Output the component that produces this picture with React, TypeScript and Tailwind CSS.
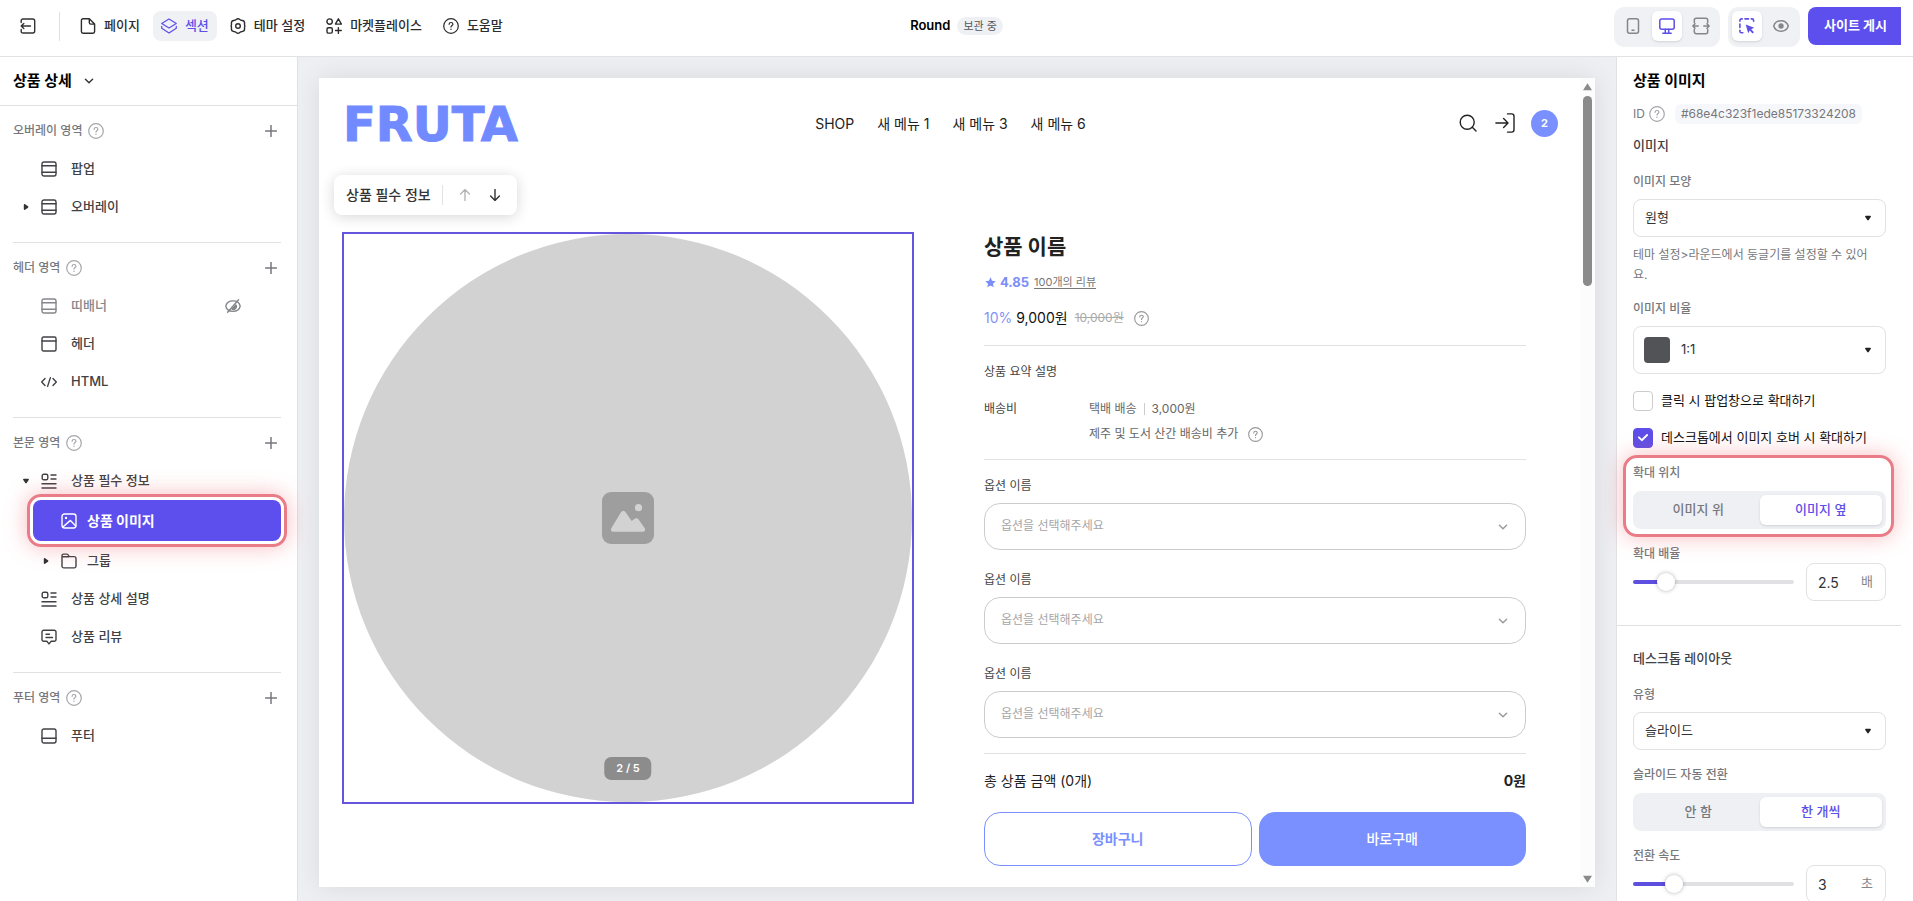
import { useState, type ReactNode } from "react";
import clsx from "clsx";

type IconProps = { className?: string };

const Svg = ({
  children,
  className = "size-4",
  sw = 1.4,
  box = 16,
}: {
  children: ReactNode;
  className?: string;
  sw?: number;
  box?: number;
}) => (
  <svg
    className={clsx("shrink-0", className)}
    viewBox={`0 0 ${box} ${box}`}
    fill="none"
    stroke="currentColor"
    strokeWidth={sw}
    strokeLinecap="round"
    strokeLinejoin="round"
    aria-hidden="true"
  >
    {children}
  </svg>
);

const ExitIcon = () => (
  <Svg>
    <path d="M1.2 4.6V2.6a1.6 1.6 0 0 1 1.6-1.6h10a1.9 1.9 0 0 1 1.9 1.9v10.2a1.9 1.9 0 0 1-1.9 1.9h-10a1.6 1.6 0 0 1-1.6-1.6v-2M1.2 8h9.3M3.8 5.4 1.2 8l2.6 2.6" />
  </Svg>
);
const PageIcon = () => (
  <Svg>
    <path d="M9.3.8H3.1A1.7 1.7 0 0 0 1.4 2.5v11a1.7 1.7 0 0 0 1.7 1.7h9.8a1.7 1.7 0 0 0 1.7-1.7V6.1L9.3.8ZM9.3.8v3.7c0 .9.7 1.6 1.6 1.6h3.7" />
  </Svg>
);
const LayersIcon = () => (
  <Svg className="-mx-px h-4 w-[18px]" box={18}>
    <path d="M9 1.2 17.2 6.2 9 11.2.8 6.2 9 1.2ZM.8 9.4v2.2L9 16.8l8.2-5.2V9.4" />
  </Svg>
);
const ThemeIcon = () => (
  <Svg>
    <path d="M6.6 1.3Q8 .1 9.4 1.3 10.6 2.4 12.2 2.5 14.6 2.8 14.6 5 14.3 6.6 14.9 8 14.3 9.4 14.6 11 14.6 13.2 12.2 13.5 10.6 13.6 9.4 14.7 8 15.9 6.6 14.7 5.4 13.6 3.8 13.5 1.4 13.2 1.4 11 1.7 9.4 1.1 8 1.7 6.6 1.4 5 1.4 2.8 3.8 2.5 5.4 2.4 6.6 1.3Z" />
    <circle cx="8" cy="8" r="2.3" />
  </Svg>
);
const MarketIcon = () => (
  <Svg>
    <circle cx="3.6" cy="3.6" r="2.7" />
    <path d="m12.4.8 3 5.3H9.4l3-5.3ZM12.4 9.6v5.8M9.5 12.5h5.8" />
    <rect x="1" y="9.8" width="5.3" height="5.3" rx="1.3" />
  </Svg>
);
const HelpIcon = ({ className = "size-4" }: IconProps) => (
  <Svg className={className} sw={1.2}>
    <circle cx="8" cy="8" r="7.3" />
    <path d="M6.1 6.3c0-1.1.8-1.8 1.9-1.8s1.9.7 1.9 1.7c0 1.3-1.9 1.4-1.9 2.9M8 11.2v.2" />
  </Svg>
);
const ChevronIcon = ({ className }: IconProps) => (
  <Svg className={className} box={10}>
    <path d="m1.4 3.2 3.6 3.6 3.6-3.6" />
  </Svg>
);
const PlusIcon = () => (
  <Svg className="size-3" box={12} sw={1.5}>
    <path d="M6 .5v11M.5 6h11" />
  </Svg>
);
const SectionIcon = () => (
  <Svg>
    <rect x="1" y="1" width="14" height="14" rx="2" />
    <path d="M1 4.7h14M1 11.3h14" />
  </Svg>
);
const HeaderIcon = () => (
  <Svg>
    <rect x="1" y="1" width="14" height="14" rx="1.5" />
    <path d="M1 5h14" />
  </Svg>
);
const FooterIcon = () => (
  <Svg>
    <rect x="1" y="1" width="14" height="14" rx="2" />
    <path d="M1 10.3h14" />
  </Svg>
);
const CodeIcon = () => (
  <Svg>
    <path d="M4 4.6.7 8 4 11.4M12 4.6 15.3 8 12 11.4M9.4 3.6 6.6 12.4" />
  </Svg>
);
const BlockIcon = () => (
  <Svg>
    <rect x="1.2" y="1.2" width="5.6" height="5.6" rx="1.6" />
    <path d="M10 2h5M10 6h5M1 10.8h14M1 15h14" />
  </Svg>
);
const ImageIcon = () => (
  <Svg>
    <rect x="1" y="1" width="14" height="14" rx="2.4" />
    <path d="M1.6 14.2 9.4 7.4l5.4 5.6" />
    <circle cx="5" cy="4.9" r="1.2" fill="currentColor" stroke="none" />
  </Svg>
);
const FolderIcon = () => (
  <Svg>
    <path d="M1 3v-.3a1.6 1.6 0 0 1 1.6-1.6h3.2c.8 0 1.3.4 1.6 1.1l.6 1.4h5.2A1.8 1.8 0 0 1 15 5.4v7.7a1.8 1.8 0 0 1-1.8 1.8H2.8A1.8 1.8 0 0 1 1 13.1V3ZM1 3.7h6.8" />
  </Svg>
);
const ReviewIcon = () => (
  <Svg>
    <path d="M2.8 1.2h10.4A1.8 1.8 0 0 1 15 3v7.4a1.8 1.8 0 0 1-1.8 1.8h-3L8 14.9l-2.2-2.7h-3A1.8 1.8 0 0 1 1 10.4V3a1.8 1.8 0 0 1 1.8-1.8ZM5 5.3h3.5M5 8.5h6.5" />
  </Svg>
);
const HiddenIcon = () => (
  <Svg>
    <path d="M.8 8.2C1.4 5 4.4 2.9 8 2.9s6.6 2.1 7.2 5.3C14.6 11.3 11.6 13.4 8 13.4S1.4 11.3.8 8.2ZM13.6 1.8 2.6 14.2" />
    <path d="m10.9 6-4.8 5a2.9 2.9 0 0 0 4.8-5Z" fill="currentColor" stroke="none" />
  </Svg>
);

const Caret = ({ open }: { open: boolean }) => (
  <svg className={clsx("size-1.5", !open && "-rotate-90")} viewBox="0 0 6 6" fill="currentColor" aria-hidden="true">
    <path d="M.9.8h4.2c.8 0 1.1.7.6 1.3L3.7 5c-.4.5-1 .5-1.4 0L.3 2.1C-.2 1.5.1.8.9.8Z" />
  </svg>
);

const menu = [
  { label: "페이지", icon: <PageIcon /> },
  { label: "섹션", icon: <LayersIcon />, active: true },
  { label: "테마 설정", icon: <ThemeIcon /> },
  { label: "마켓플레이스", icon: <MarketIcon /> },
  { label: "도움말", icon: <HelpIcon /> },
];

const TopBar = () => (
  <header className="grid h-[57px] shrink-0 grid-cols-[1fr_auto_1fr] border-b border-[#e2e2e4]">
    <div className="flex items-center pb-1">
      <button className="ml-5 text-[#333]" aria-label="나가기">
        <ExitIcon />
      </button>
      <span className="mr-3 ml-[23px] h-[29px] w-px bg-[#dfe0e3]" />
      <nav className="flex gap-[5px]">
        {menu.map(({ label, icon, active }) => (
          <button
            key={label}
            className={clsx(
              "flex h-[30px] items-center gap-2 rounded-lg px-2 font-medium whitespace-nowrap",
              active ? "bg-[#f0f1f4] text-[#5d4fe8]" : "text-[#2c2c2e]",
            )}
          >
            {icon}
            {label}
          </button>
        ))}
      </nav>
    </div>

    <div className="flex items-center gap-[7px] pb-1">
      <h1 className="font-semibold text-black">Round</h1>
      <span className="rounded-full bg-[#eff0f3] px-1.5 text-[11px] leading-[18px] text-[#55565a]">보관 중</span>
    </div>

    <div className="flex items-start justify-end gap-2 pt-[7px] pr-3">
      <div className="flex gap-1 rounded-[10px] bg-[#f0f1f4] p-1 pb-1.5 text-[#85868a]">
        <button className="flex size-[30px] items-center justify-center" aria-label="모바일">
          <Svg sw={1.5}>
            <rect x="2.5" y=".8" width="11" height="14.4" rx="2" />
            <path d="M7 12.3h2" />
          </Svg>
        </button>
        <button
          className="flex size-[30px] items-center justify-center rounded-md bg-white text-[#5d4fe8] shadow-sm"
          aria-label="데스크톱"
        >
          <Svg sw={1.5}>
            <rect x=".8" y=".9" width="14.4" height="10.4" rx="2" />
            <path d="M6.3 11.3v3.6M9.7 11.3v3.6M3.8 15.2h8.4" />
          </Svg>
        </button>
        <button className="flex size-[30px] items-center justify-center" aria-label="전체 너비">
          <Svg className="size-[18px]" box={18} sw={1.5}>
            <path d="M2.3 5.5V3.3a2 2 0 0 1 2-2h9.4a2 2 0 0 1 2 2v2.2M2.3 12.5v2.2a2 2 0 0 0 2 2h9.4a2 2 0 0 0 2-2v-2.2M.8 9h5.4M11.8 9h5.4M3 6.8.8 9 3 11.2M15 6.8 17.2 9 15 11.2" />
          </Svg>
        </button>
      </div>
      <div className="flex gap-1 rounded-[10px] bg-[#f0f1f4] p-1 pb-1.5 text-[#85868a]">
        <button
          className="flex size-[30px] items-center justify-center rounded-md bg-white text-[#5d4fe8] shadow-sm"
          aria-label="선택 모드"
        >
          <Svg sw={1.6}>
            <path d="M.9 3.2v-.7A1.6 1.6 0 0 1 2.5.9h.7M6 .9h3.5M12.3.9h.7a1.6 1.6 0 0 1 1.6 1.6v.7M.9 6v3.5M.9 12.3v.9a1.6 1.6 0 0 0 1.6 1.6h1.3" />
            <path d="m6.7 6.5 8.5 3.3-3 1.5 2.7 3-1.4 1.2-2.7-3-1.6 2.8-2.5-8.8Z" fill="currentColor" stroke="none" />
          </Svg>
        </button>
        <button className="flex size-[30px] items-center justify-center" aria-label="미리보기">
          <Svg sw={1.5}>
            <path d="M.7 8C1.8 4.6 4.6 2.8 8 2.8s6.2 1.8 7.3 5.2c-1.1 3.4-3.9 5.2-7.3 5.2S1.8 11.4.7 8Z" />
            <circle cx="8" cy="8" r="2.7" fill="currentColor" stroke="none" />
          </Svg>
        </button>
      </div>
      <button className="h-[38px] rounded-l-lg bg-[#5d4fee] pr-3.5 pl-4 font-bold whitespace-nowrap text-white">
        사이트 게시
      </button>
    </div>
  </header>
);

const SideSection = ({ title, children, last }: { title: string; children: ReactNode; last?: boolean }) => (
  <section className={clsx("mb-1.5", !last && "border-b border-[#e1e1e3] pb-4")}>
    <div className="flex h-[38px] items-center pr-1 text-[#77787c]">
      <h3 className="text-[12px] font-medium">{title}</h3>
      <HelpIcon className="ml-1.5 size-4 text-[#a5a6aa]" />
      <button className="ml-auto text-[#77787c]" aria-label={`${title} 추가`}>
        <PlusIcon />
      </button>
    </div>
    <ul>{children}</ul>
  </section>
);

const SideItem = ({
  label,
  icon,
  open,
  nested,
  hidden,
}: {
  label: string;
  icon: ReactNode;
  open?: boolean;
  nested?: boolean;
  hidden?: boolean;
}) => (
  <li
    className={clsx(
      "flex h-[38px] items-center font-medium",
      nested && "pl-5",
      hidden ? "text-[#85868a]" : "text-[#404145]",
    )}
  >
    <span className="flex w-7 justify-end pr-3 text-[#333]">{open !== undefined && <Caret open={open} />}</span>
    {icon}
    <a href="#" className={nested ? "ml-2.5" : "ml-3.5"}>
      {label}
    </a>
    {hidden && (
      <button className="mr-10 ml-auto" aria-label="보이기">
        <HiddenIcon />
      </button>
    )}
  </li>
);

// red frame that marks a highlighted control
const HighlightRing = ({ className }: IconProps) => (
  <span
    className={clsx(
      "pointer-events-none absolute rounded-[14px] border-[3px] border-[#e97c86] shadow-[0_0_22px_rgba(240,90,100,0.4)]",
      className,
    )}
  />
);

const SelectedItem = ({ label, icon }: { label: string; icon: ReactNode }) => (
  <li className="relative mb-px ml-5 flex h-[41px] items-center rounded-lg bg-[#5d4fee] pl-7 text-[14px] font-bold text-white">
    {icon}
    <a href="#" className="ml-2.5">
      {label}
    </a>
    <HighlightRing className="-inset-1.5" />
  </li>
);

const Sidebar = () => (
  <aside className="flex w-[298px] shrink-0 flex-col border-r border-[#e1e1e3]">
    <button className="flex h-[49px] shrink-0 items-center gap-3 border-b border-[#e1e1e3] pl-[13px] text-[15px] font-bold text-black">
      상품 상세
      <ChevronIcon className="size-2.5 text-[#333]" />
    </button>
    <div className="pt-1.5 pr-4 pl-[13px]">
      <SideSection title="오버레이 영역">
        <SideItem label="팝업" icon={<SectionIcon />} />
        <SideItem label="오버레이" icon={<SectionIcon />} open={false} />
      </SideSection>
      <SideSection title="헤더 영역">
        <SideItem label="띠배너" icon={<SectionIcon />} hidden />
        <SideItem label="헤더" icon={<HeaderIcon />} />
        <SideItem label="HTML" icon={<CodeIcon />} />
      </SideSection>
      <SideSection title="본문 영역">
        <SideItem label="상품 필수 정보" icon={<BlockIcon />} open />
        <SelectedItem label="상품 이미지" icon={<ImageIcon />} />
        <SideItem label="그룹" icon={<FolderIcon />} open={false} nested />
        <SideItem label="상품 상세 설명" icon={<BlockIcon />} />
        <SideItem label="상품 리뷰" icon={<ReviewIcon />} />
      </SideSection>
      <SideSection title="푸터 영역" last>
        <SideItem label="푸터" icon={<FooterIcon />} />
      </SideSection>
    </div>
  </aside>
);

const storeMenu = ["SHOP", "새 메뉴 1", "새 메뉴 3", "새 메뉴 6"];

const StoreHeader = () => (
  <div className="grid h-[90px] grid-cols-[1fr_auto_1fr] items-center pr-[22px] pl-6 text-[14px] text-[#222]">
    <a
      href="#"
      className="pt-px font-['DejaVu_Sans',sans-serif] text-[48px] leading-none font-bold text-[#728aff] [-webkit-text-stroke:1px_#728aff]"
    >
      FRUTA
    </a>
    <nav className="flex gap-[23px] whitespace-nowrap">
      {storeMenu.map((item) => (
        <a key={item} href="#">
          {item}
        </a>
      ))}
    </nav>
    <div className="flex items-center justify-end gap-4">
      <button className="mr-0.5" aria-label="검색">
        <Svg className="size-[18px]" box={18}>
          <circle cx="8.2" cy="8.2" r="7" />
          <path d="m13.3 13.3 3.7 3.7" />
        </Svg>
      </button>
      <button aria-label="로그인">
        <Svg className="size-5" box={20}>
          <path d="M.9 10h12M8.6 5.6 13 10l-4.4 4.4M12.5.9h4.2A2.3 2.3 0 0 1 19 3.2v13.6a2.3 2.3 0 0 1-2.3 2.3h-4.2" />
        </Svg>
      </button>
      <button
        className="flex size-[27px] items-center justify-center rounded-full bg-[#7a90ff] text-[11px] font-bold text-white"
        aria-label="장바구니 2개"
      >
        2
      </button>
    </div>
  </div>
);

const OptionField = ({ id }: { id: string }) => (
  <div className="text-[12px]">
    <label htmlFor={id} className="block leading-[18px] text-[#444]">
      옵션 이름
    </label>
    <div className="relative mt-2">
      <select
        id={id}
        className="h-[47px] w-full appearance-none rounded-[16px] border border-[#ccc] bg-white px-4 pb-0.5 text-[#a6a6a6]"
      >
        <option>옵션을 선택해주세요</option>
      </select>
      <ChevronIcon className="pointer-events-none absolute top-[19px] right-[18px] size-2.5 text-[#999]" />
    </div>
  </div>
);

const ProductInfo = () => (
  <div className="min-w-0 flex-[542]">
    <h2 className="text-[21px] leading-[30px] font-bold text-[#222]">상품 이름</h2>
    <div className="mt-2.5 flex items-center leading-5">
      <svg className="ml-px size-[11px] fill-[#7a8df8]" viewBox="0 0 12 12" aria-hidden="true">
        <path d="m6 .4 1.7 3.7 4 .5-3 2.7.8 4L6 9.3l-3.500 2 .8-4-3-2.7 4-.5L6 .4Z" />
      </svg>
      <b className="ml-1 text-[13px] text-[#7a8df8]">4.85</b>
      <a href="#" className="ml-[5px] text-[11px] text-[#777] underline underline-offset-2">
        100개의 리뷰
      </a>
    </div>
    <div className="mt-4 flex items-center text-[14px] leading-5">
      <span className="text-[#8494f5]">10%</span>
      <span className="ml-1 text-[#111]">9,000원</span>
      <del className="ml-[7px] text-[12px] text-[#aaa]">10,000원</del>
      <HelpIcon className="ml-2.5 size-[15px] text-[#999]" />
    </div>
    <div className="mt-[17px] border-y border-[#e2e2e2] pt-4 pb-[15px] text-[12px] leading-5">
      <p className="text-[#444]">상품 요약 설명</p>
      <dl className="mt-[17px] flex">
        <dt className="w-[105px] text-[#444]">배송비</dt>
        <dd className="text-[#666]">
          <p className="flex items-center">
            택배 배송
            <span className="mx-[7px] h-3 w-px bg-[#ccc]" />
            3,000원
          </p>
          <p className="mt-[5px] flex items-center gap-2.5">
            제주 및 도서 산간 배송비 추가
            <HelpIcon className="size-[15px] text-[#999]" />
          </p>
        </dd>
      </dl>
    </div>
    <div className="flex flex-col gap-[21px] border-b border-[#e2e2e2] pt-[17px] pb-[15px]">
      <OptionField id="option-1" />
      <OptionField id="option-2" />
      <OptionField id="option-3" />
    </div>
    <div className="mt-[17px] flex justify-between text-[14px] leading-5 text-[#222]">
      <span>총 상품 금액 (0개)</span>
      <b>0원</b>
    </div>
    <div className="mt-[21px] grid grid-cols-2 gap-[7px] text-[14px] font-bold">
      <button className="h-[54px] rounded-[16px] border border-[#7a90ff] pb-0.5 text-[#7a90ff]">장바구니</button>
      <button className="h-[54px] rounded-[16px] bg-[#7a90ff] pb-0.5 font-medium text-white">바로구매</button>
    </div>
  </div>
);

const ProductImage = () => (
  <div className="relative aspect-square min-w-0 flex-[568] self-start border-2 border-[#6455dc]">
    <div className="flex size-full items-center justify-center rounded-full bg-[#d2d2d2]">
      <svg className="size-[52px]" viewBox="0 0 52 52" aria-hidden="true">
        <rect width="52" height="52" rx="9" fill="#9e9e9e" />
        <path
          d="M9.3 36.3 19 20.2c1-1.7 3.6-1.7 4.6 0l6.1 8.9 2.6-2.2c1.4-1.2 3.4-.8 4.3.7l6.2 8.7c1 1.5 0 3.5-1.8 3.5H11c-1.8 0-2.7-2-1.7-3.5Z"
          fill="#d2d2d2"
        />
        <circle cx="36.5" cy="15.7" r="3.6" fill="#d2d2d2" />
      </svg>
    </div>
    <span className="absolute bottom-[22px] left-1/2 -translate-x-1/2 rounded-[7px] bg-[#8c8c8c] px-3 text-[11px] leading-[23px] font-semibold text-white">
      2 / 5
    </span>
  </div>
);

const BlockToolbar = () => (
  <div className="absolute top-[97px] left-[15px] flex h-10 items-center rounded-lg bg-white pr-4 pb-px pl-3 text-[14px] font-medium whitespace-nowrap text-[#333] shadow-[0_2px_14px_rgba(0,0,0,0.16)]">
    상품 필수 정보
    <span className="mr-4 ml-[11px] h-5 w-px bg-[#e2e2e2]" />
    <button className="text-[#b5b5b5]" aria-label="위로 이동">
      <Svg className="size-3" box={12}>
        <path d="M6 11.6V.8M1.6 5 6 .6 10.4 5" />
      </Svg>
    </button>
    <button className="ml-[18px]" aria-label="아래로 이동">
      <Svg className="size-3" box={12}>
        <path d="M6 .4v10.8M1.6 7 6 11.4 10.4 7" />
      </Svg>
    </button>
  </div>
);

const Scrollbar = () => (
  <div className="flex w-[15px] shrink-0 flex-col items-center bg-[#fcfcfc] pt-[5px] pb-1 text-[#8a8a8a]">
    <svg className="h-2 w-[9px] fill-current" viewBox="0 0 9 8" aria-hidden="true">
      <path d="M4.5.3 9 7.3H0L4.5.3Z" />
    </svg>
    <span className="mt-[5px] h-[190px] w-[9px] rounded-full bg-current" />
    <svg className="mt-auto h-2 w-[9px] rotate-180 fill-current" viewBox="0 0 9 8" aria-hidden="true">
      <path d="M4.5.3 9 7.3H0L4.5.3Z" />
    </svg>
  </div>
);

const Preview = () => (
  <main className="flex min-w-0 flex-1 bg-[#eeeff3] px-[21px] pt-[21px] pb-3.5">
    <div className="flex min-w-0 flex-1 bg-white shadow-[0_0_24px_rgba(0,0,0,0.09)]">
      <div className="relative min-w-0 flex-1 overflow-hidden">
        <StoreHeader />
        <div className="flex gap-[70px] pt-16 pr-[54px] pl-[23px]">
          <ProductImage />
          <ProductInfo />
        </div>
        <BlockToolbar />
      </div>
      <Scrollbar />
    </div>
  </main>
);

const SelectField = ({ id, label, value, swatch }: { id: string; label: string; value: string; swatch?: boolean }) => (
  <div>
    <label htmlFor={id} className="block text-[12px] leading-5 font-medium text-[#77787c]">
      {label}
    </label>
    <div className="relative mt-[7px]">
      <select
        id={id}
        className={clsx(
          "w-full appearance-none rounded-lg border border-[#e1e1e3] bg-white text-[#333]",
          swatch ? "h-12 pl-[47px]" : "h-[38px] pl-[11px]",
        )}
      >
        <option>{value}</option>
      </select>
      {swatch && <span className="absolute top-[11px] left-[11px] size-[26px] rounded-[4px] bg-[#525357]" />}
      <span className="pointer-events-none absolute inset-y-0 right-[15px] flex items-center text-[#222]">
        <Caret open />
      </span>
    </div>
  </div>
);

const CheckField = ({ label, defaultChecked }: { label: string; defaultChecked?: boolean }) => (
  <label className="mt-[17px] flex h-5 items-center gap-2 whitespace-nowrap text-[#111]">
    <span className="relative size-5 shrink-0">
      <input
        type="checkbox"
        defaultChecked={defaultChecked}
        className="peer block size-5 appearance-none rounded border border-[#ccc] bg-white checked:border-[#5d4fe8] checked:bg-[#5d4fe8]"
      />
      <span className="pointer-events-none absolute inset-0 hidden items-center justify-center text-white peer-checked:flex">
        <Svg className="size-2.5" box={10} sw={1.9}>
          <path d="m.9 4.3 2.9 2.9L9.1 2" />
        </Svg>
      </span>
    </span>
    {label}
  </label>
);

const Segmented = ({ label, options, selected }: { label: string; options: string[]; selected: string }) => {
  const [value, setValue] = useState(selected);
  return (
    <div role="group" aria-label={label}>
      <p className="text-[12px] leading-5 font-medium text-[#77787c]">{label}</p>
      <div className="mt-2 grid h-[38px] grid-cols-2 rounded-lg bg-[#eff0f3] p-1">
        {options.map((option) => (
          <button
            key={option}
            onClick={() => setValue(option)}
            className={clsx(
              "rounded-md font-medium",
              option === value ? "bg-white text-[#5d4fe8] shadow-sm" : "text-[#77787c]",
            )}
          >
            {option}
          </button>
        ))}
      </div>
    </div>
  );
};

const RangeField = ({
  id,
  label,
  initial,
  step,
  unit,
}: {
  id: string;
  label: string;
  initial: number;
  step: number;
  unit: string;
}) => {
  const min = 1;
  const max = 10;
  const [value, setValue] = useState(initial);
  const percent = ((value - min) / (max - min)) * 100;
  return (
    <div className="mt-[15px]">
      <label htmlFor={id} className="block text-[12px] leading-[19px] font-medium text-[#77787c]">
        {label}
      </label>
      <div className="flex items-center gap-3">
        <input
          id={id}
          type="range"
          min={min}
          max={max}
          step={step}
          value={value}
          onChange={(e) => setValue(Number(e.target.value))}
          className="h-1 min-w-0 flex-1 appearance-none rounded-full [&::-webkit-slider-thumb]:size-[18px] [&::-webkit-slider-thumb]:appearance-none [&::-webkit-slider-thumb]:rounded-full [&::-webkit-slider-thumb]:bg-white [&::-webkit-slider-thumb]:shadow-[0_0_4px_rgba(0,0,0,0.3)]"
          style={{ background: `linear-gradient(to right, #5d4fe0 ${percent}%, #e1e1e3 ${percent}%)` }}
        />
        <div className="flex h-[38px] w-20 items-center rounded-lg border border-[#e1e1e3] pr-3 pl-[11px] text-[#333]">
          <input
            aria-label={`${label} 값`}
            value={value}
            onChange={(e) => setValue(Number(e.target.value))}
            className="w-full min-w-0 text-[14px] outline-none"
          />
          <span className="text-[#85868a]">{unit}</span>
        </div>
      </div>
    </div>
  );
};

const SettingsPanel = () => (
  <aside className="mr-3 w-[285px] shrink-0 border-l border-[#e1e1e3]">
    <div className="pr-[15px] pb-6 pl-4">
      <h2 className="h-[47px] text-[15px] leading-[47px] font-bold text-black">상품 이미지</h2>
      <div className="flex h-5 items-center text-[12px] text-[#77787c]">
        ID
        <HelpIcon className="ml-1 size-4 text-[#a5a6aa]" />
        <span className="ml-2.5 rounded-md bg-[#f6f7fa] px-1.5 leading-5">#68e4c323f1ede85173324208</span>
      </div>
      <h3 className="mt-[11px] mb-[17px] leading-5 font-medium text-[#404145]">이미지</h3>
      <SelectField id="shape" label="이미지 모양" value="원형" />
      <p className="mt-2 mb-3.5 text-[12px] leading-5 text-[#77787c]">
        테마 설정&gt;라운드에서 둥글기를 설정할 수 있어
        <br />
        요.
      </p>
      <SelectField id="ratio" label="이미지 비율" value="1:1" swatch />
      <CheckField label="클릭 시 팝업창으로 확대하기" />
      <CheckField label="데스크톱에서 이미지 호버 시 확대하기" defaultChecked />
      <div className="relative mt-[15px]">
        <Segmented label="확대 위치" options={["이미지 위", "이미지 옆"]} selected="이미지 옆" />
        <HighlightRing className="-top-2 -right-2 -bottom-2 -left-2.5" />
      </div>
      <RangeField id="zoom" label="확대 배율" initial={2.5} step={0.5} unit="배" />
    </div>
    <div className="border-t border-[#e1e1e3] pt-[22px] pr-[15px] pl-4">
      <h3 className="mb-[17px] leading-5 font-medium text-[#404145]">데스크톱 레이아웃</h3>
      <SelectField id="type" label="유형" value="슬라이드" />
      <div className="mt-[15px]">
        <Segmented label="슬라이드 자동 전환" options={["안 함", "한 개씩"]} selected="한 개씩" />
      </div>
      <RangeField id="speed" label="전환 속도" initial={3} step={1} unit="초" />
    </div>
  </aside>
);

export default function App() {
  return (
    <div className="flex h-screen flex-col overflow-hidden bg-white font-['Inter','Noto_Sans_CJK_KR',sans-serif] text-[13px]">
      <TopBar />
      <div className="flex min-h-0 flex-1">
        <Sidebar />
        <Preview />
        <SettingsPanel />
      </div>
    </div>
  );
}
